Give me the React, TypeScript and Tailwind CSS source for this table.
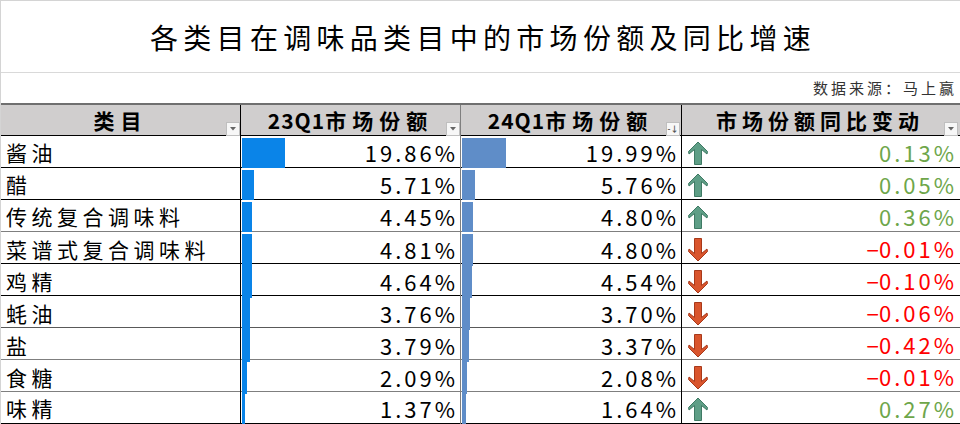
interface Row {
  name: string;
  q23: number;
  q24: number;
  diff: number;
  line: string;
}

const rows: Row[] = [
  { name: "酱油", q23: 19.86, q24: 19.99, diff: 0.13, line: "border-black" },
  { name: "醋", q23: 5.71, q24: 5.76, diff: 0.05, line: "border-black" },
  { name: "传统复合调味料", q23: 4.45, q24: 4.8, diff: 0.36, line: "border-[#7f7f7f]" },
  { name: "菜谱式复合调味料", q23: 4.81, q24: 4.8, diff: -0.01, line: "border-black" },
  { name: "鸡精", q23: 4.64, q24: 4.54, diff: -0.1, line: "border-black" },
  { name: "蚝油", q23: 3.76, q24: 3.7, diff: -0.06, line: "border-[#595959]" },
  { name: "盐", q23: 3.79, q24: 3.37, diff: -0.42, line: "border-[#7f7f7f]" },
  { name: "食糖", q23: 2.09, q24: 2.08, diff: -0.01, line: "border-[#7f7f7f]" },
  { name: "味精", q23: 1.37, q24: 1.64, diff: 0.27, line: "border-black" },
];

const font = { fontFamily: '"Noto Sans CJK SC", "Noto Sans", sans-serif' };

const UpArrow = () => (
  <svg width="20" height="24" viewBox="0 0 20 24">
    <polygon
      points="10,1 19.5,10.5 19,13 13.5,8.5 13.5,23.5 6.5,23.5 6.5,8.5 1,13 0.5,10.5"
      fill="#5e9e86"
      stroke="#3f7a64"
      strokeWidth="1"
    />
  </svg>
);

const DownArrow = () => (
  <svg width="20" height="24" viewBox="0 0 20 24">
    <polygon
      points="10,23 19.5,13.5 19,11 13.5,15.5 13.5,0.5 6.5,0.5 6.5,15.5 1,11 0.5,13.5"
      fill="#d9552d"
      stroke="#a8391a"
      strokeWidth="1"
    />
  </svg>
);

const FilterBtn = ({ sorted }: { sorted?: boolean }) => (
  <div className="flex h-[14px] w-[14px] items-center justify-center border border-[#bfbfbf] bg-[#f7f7f7]">
    {sorted ? (
      <span className="text-[8px] leading-none text-[#555]">-↓</span>
    ) : (
      <svg width="6" height="4" viewBox="0 0 6 4">
        <polygon points="0,0 6,0 3,3.5" fill="#666" />
      </svg>
    )}
  </div>
);

const fmt = (v: number) => `${v.toFixed(2)}%`;

export default function App() {
  return (
    <div
      className="flex h-[424px] w-[960px] flex-col overflow-hidden border-l border-t border-[#d4d4d4] bg-white text-black"
      style={font}
    >
      <div className="flex h-[72px] shrink-0 items-center justify-center border-b border-[#d9d9d9] pl-[5px] text-[28px] tracking-[5.3px]">
        各类目在调味品类目中的市场份额及同比增速
      </div>
      <div className="flex h-[30px] shrink-0 items-center justify-end pr-[3px] text-[15px] tracking-[3px] text-[#333]">
        数据来源：马上赢
      </div>

      <div className="grid h-[33px] shrink-0 grid-cols-[240px_220px_221px_1fr] border-b border-t-2 border-b-black border-t-[#6f6f6f] bg-[#d0cece] text-[21px] font-bold">
        <div className="flex items-center border-r border-black pl-[14px]">
          <span className="flex-1 text-center tracking-[6px]">类目</span>
          <div className="self-end pb-[1px]"><FilterBtn /></div>
        </div>
        <div className="flex items-center border-r border-[#7f7f7f] pl-[14px]">
          <span className="flex-1 text-center">
            <span className="tracking-[1px]">23Q1</span>
            <span className="tracking-[6px]">市场份额</span>
          </span>
          <div className="self-end pb-[1px]"><FilterBtn /></div>
        </div>
        <div className="flex items-center border-r border-black pl-[14px]">
          <span className="flex-1 text-center">
            <span className="tracking-[1px]">24Q1</span>
            <span className="tracking-[6px]">市场份额</span>
          </span>
          <div className="self-end pb-[1px] pr-[1px]"><FilterBtn sorted /></div>
        </div>
        <div className="flex items-center pl-[14px] pr-[2px]">
          <span className="flex-1 text-center tracking-[5px]">市场份额同比变动</span>
          <div className="self-end pb-[1px]"><FilterBtn /></div>
        </div>
      </div>

      {rows.map((r) => (
        <div
          key={r.name}
          className={`grid h-[32px] shrink-0 grid-cols-[240px_220px_221px_1fr] border-b ${r.line}`}
        >
          <div className="flex items-center border-r border-black pl-[5px] text-[21px] tracking-[4.5px]">
            {r.name}
          </div>
          <div className="relative flex items-center justify-end border-r border-[#7f7f7f] pr-[2px] text-[22px] tracking-[3px]">
            <div
              className="absolute bottom-[1px] left-[1px] top-[2px] bg-[#0a84e8]"
              style={{ width: `${r.q23 * 2.18}px` }}
            />
            <span className="relative">{fmt(r.q23)}</span>
          </div>
          <div className="relative flex items-center justify-end border-r border-black pr-[2px] text-[22px] tracking-[3px]">
            <div
              className="absolute bottom-[1px] left-[1px] top-[2px] bg-[#5f8dc8]"
              style={{ width: `${r.q24 * 2.2}px` }}
            />
            <span className="relative">{fmt(r.q24)}</span>
          </div>
          <div className="flex items-center justify-between pl-[6px] pr-[3px] text-[22px] tracking-[3px]">
            {r.diff >= 0 ? <UpArrow /> : <DownArrow />}
            <span className={r.diff >= 0 ? "text-[#6ea64a]" : "text-[#ff0000]"}>
              {r.diff < 0 && (
                <span className="tracking-[0px]" style={{ fontFamily: '"Liberation Sans", sans-serif' }}>
                  −
                </span>
              )}
              {fmt(Math.abs(r.diff))}
            </span>
          </div>
        </div>
      ))}
    </div>
  );
}
